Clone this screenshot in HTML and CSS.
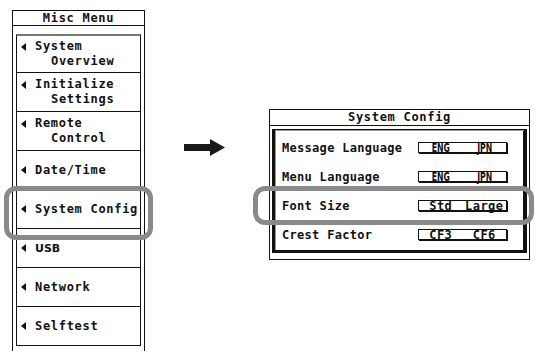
FILE: index.html
```html
<!DOCTYPE html>
<html>
<head>
<meta charset="utf-8">
<link rel="stylesheet" href="styles.css">
</head>
<body>
<div class="page">
  <div class="menu">
    <div class="menu-title">Misc Menu</div>
    <div class="menu-list">
      <div class="btn"><div class="line"><span class="tri"></span>System</div><div class="line sub">Overview</div></div>
      <div class="btn"><div class="line"><span class="tri"></span>Initialize</div><div class="line sub">Settings</div></div>
      <div class="btn"><div class="line"><span class="tri"></span>Remote</div><div class="line sub">Control</div></div>
      <div class="btn"><div class="line"><span class="tri"></span>Date/Time</div></div>
      <div class="btn"><div class="line"><span class="tri"></span>System Config</div></div>
      <div class="btn"><div class="line"><span class="tri"></span><span class="usb">USB</span></div></div>
      <div class="btn"><div class="line"><span class="tri"></span>Network</div></div>
      <div class="btn"><div class="line"><span class="tri"></span>Selftest</div></div>
    </div>
  </div>

  <svg class="arrow" width="41" height="18" viewBox="0 0 41 18">
    <rect x="0" y="5" width="27" height="7" fill="#1a1a1a"/>
    <polygon points="26,0 41,8.5 26,17" fill="#1a1a1a"/>
  </svg>

  <div class="dialog">
    <div class="dialog-title">System Config</div>
    <div class="frame">
      <div class="row"><span class="label">Message Language</span><span class="val sans"><span>ENG</span><span>JPN</span></span></div>
      <div class="row"><span class="label">Menu Language</span><span class="val sans"><span>ENG</span><span>JPN</span></span></div>
      <div class="row"><span class="label">Font Size</span><span class="val mono"><span>Std</span><span>Large</span></span></div>
      <div class="row"><span class="label">Crest Factor</span><span class="val mono"><span>CF3</span><span>CF6</span></span></div>
    </div>
  </div>

  <div class="ring ring-left"></div>
  <div class="ring ring-right"></div>
</div>
</body>
</html>
```

FILE: styles.css
```css
html, body {
  margin: 0;
  padding: 0;
  background: #fff;
}
body {
  width: 535px;
  height: 351px;
  overflow: hidden;
  font-family: "DejaVu Sans Mono", "Liberation Mono", monospace;
  font-weight: bold;
  font-size: 12px;
  letter-spacing: 0.7px;
  color: #111;
}
.page {
  position: relative;
  display: flex;
  align-items: flex-start;
  width: 535px;
  height: 351px;
  overflow: hidden;
}
.menu {
  margin: 10px 0 0 12px;
  width: 133px;
  height: 341px;
  box-sizing: border-box;
  border: 1px solid #111;
  border-bottom: none;
  display: flex;
  flex-direction: column;
}
.menu-title {
  height: 14px;
  line-height: 14px;
  border-bottom: 1px solid #111;
  text-align: center;
}
.menu-list {
  display: flex;
  flex-direction: column;
  padding: 8px 3px 0 3px;
}
.btn {
  height: 39px;
  box-sizing: border-box;
  border: 1px solid #111;
  border-top: none;
  display: flex;
  flex-direction: column;
  justify-content: center;
  padding-left: 4px;
}
.btn:first-child {
  border-top: 2px solid #777;
}
.line {
  display: flex;
  align-items: center;
  height: 15px;
  line-height: 15px;
}
.sub {
  padding-left: 30px;
}
.tri {
  width: 0;
  height: 0;
  border-top: 4px solid transparent;
  border-bottom: 4px solid transparent;
  border-right: 5px solid #111;
  margin-right: 9px;
}
.usb {
  font-family: "DejaVu Sans", sans-serif;
  font-size: 11px;
  letter-spacing: 0;
}
.arrow {
  margin: 139px 0 0 39px;
}
.dialog {
  margin: 109px 0 0 44px;
  width: 261px;
  height: 151px;
  box-sizing: border-box;
  border: 1px solid #111;
  display: flex;
  flex-direction: column;
}
.dialog-title {
  height: 15px;
  line-height: 15px;
  border-bottom: 1px solid #111;
  text-align: center;
}
.frame {
  margin: 3px 2px 0 2px;
  height: 124px;
  box-sizing: border-box;
  border-top: 1px solid #111;
  border-left: 3px solid #111;
  border-right: 3px solid #111;
  border-bottom: 3px solid #111;
  box-shadow: inset 1px 1px 0 #999, inset -1px 0 0 #111;
  padding: 3px 0 0 7px;
  display: flex;
  flex-direction: column;
}
.row {
  height: 29px;
  display: flex;
  align-items: center;
  justify-content: space-between;
  padding-right: 17px;
}
.label {
  letter-spacing: 0.3px;
}
.val {
  width: 89px;
  height: 11px;
  box-sizing: border-box;
  border: 1px solid #111;
  box-shadow: 1px 1px 0 #111;
  display: grid;
  grid-template-columns: 1fr 1fr;
  align-items: center;
  line-height: 11px;
}
.val span {
  text-align: center;
}
.sans span {
  font-family: "DejaVu Sans Condensed", "Liberation Sans", sans-serif;
  font-size: 12px;
  letter-spacing: 0;
  display: inline-block;
  transform: scaleX(0.72);
}
.mono {
  letter-spacing: 0.5px;
}
.ring {
  position: absolute;
  box-sizing: border-box;
  border: 5px solid #8a8a8a;
  border-radius: 12px;
}
.ring-left {
  left: 4px;
  top: 186px;
  width: 149px;
  height: 54px;
}
.ring-right {
  left: 253px;
  top: 186px;
  width: 281px;
  height: 39px;
}
```
